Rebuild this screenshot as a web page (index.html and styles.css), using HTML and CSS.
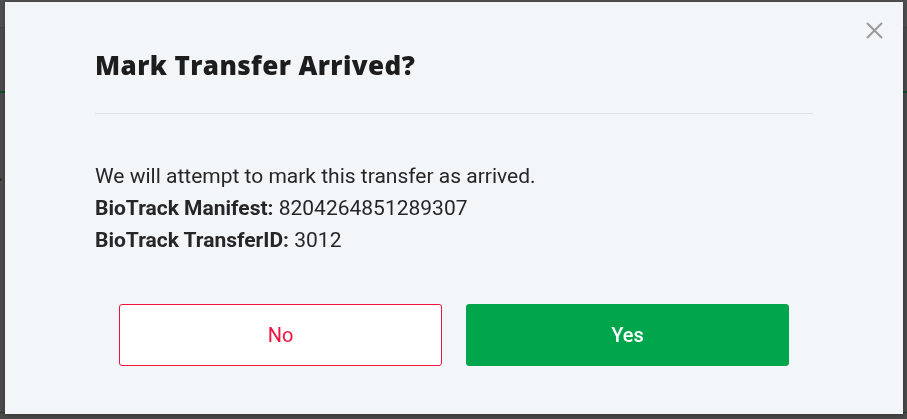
FILE: index.html
```html
<!DOCTYPE html>
<html lang="en">
<head>
    <meta charset="UTF-8">
    <meta name="viewport" content="width=device-width, initial-scale=1.0">
    <title>Mark Transfer Arrived</title>
    <link rel="stylesheet" href="styles.css">
</head>
<body>
    <div class="pagina">
        <div class="topo"></div>
        <div class="faixa"></div>
        <div class="seta">&gt;</div>
        <div class="rodape">
            <span class="rodape-texto">Receiving</span>
        </div>
    </div>

    <div class="fundo">
        <div class="modal">
            <button class="fechar" aria-label="Close">
                <svg width="17" height="17" viewBox="0 0 17 17">
                    <path d="M1 1 L16 16 M16 1 L1 16" stroke="#9a9a9a" stroke-width="2" fill="none"/>
                </svg>
            </button>

            <h2 class="titulo">Mark Transfer Arrived?</h2>

            <div class="conteudo">
                <p>We will attempt to mark this transfer as arrived.</p>
                <p><b>BioTrack Manifest:</b> 8204264851289307</p>
                <p><b>BioTrack TransferID:</b> 3012</p>
            </div>

            <div class="acoes">
                <button class="btn nao">No</button>
                <button class="btn sim">Yes</button>
            </div>
        </div>
    </div>
</body>
</html>
```

FILE: styles.css
```css
body {
  margin: 0;
  height: 100vh;
  overflow: hidden;
  background: #4a4a4a;
  font-family: Roboto, "Liberation Sans", sans-serif;
}

/* page behind the overlay */
.pagina {
  height: 100vh;
  position: relative;
}

.topo {
  height: 27px;
  background: #4f4f4f;
  border-bottom: 1px solid #434343;
}

.faixa {
  margin-top: 63px;
  height: 2px;
  background: #0b4a22;
}

.seta {
  margin-top: 77px;
  color: #2a2a2a;
  font-size: 16px;
  margin-left: -6px;
}

.rodape {
  position: absolute;
  left: 0;
  right: 0;
  bottom: 0;
  height: 6px;
  border-top: 1px solid #1f3d26;
}

.rodape-texto {
  display: inline-block;
  margin-left: -10px;
  width: 122px;
  height: 6px;
  overflow: hidden;
  border-right: 1px solid #1f3d26;
  color: #1b4a2a;
  font-size: 20px;
  line-height: 14px;
}

/* modal */
.fundo {
  position: fixed;
  inset: 0;
  padding: 2px 0 0 5px;
}

.modal {
  position: relative;
  box-sizing: border-box;
  width: 898px;
  height: 412px;
  background: #f3f6f9;
  padding: 45px 90px 0;
  box-shadow: 0 1px 4px rgba(0, 0, 0, 0.3);
}

.fechar {
  position: absolute;
  top: 20px;
  right: 20px;
  padding: 0;
  border: 0;
  background: none;
  width: 17px;
  height: 17px;
  cursor: pointer;
}

.fechar svg {
  display: block;
}

.titulo {
  margin: 0;
  padding-bottom: 30px;
  border-bottom: 1px solid #dde1e5;
  font-family: "Open Sans", sans-serif;
  font-weight: 800;
  font-size: 26px;
  letter-spacing: 0.4px;
  line-height: 36px;
  color: #1d1d1d;
}

.conteudo {
  padding-top: 46px;
  color: #262626;
  font-size: 21px;
  line-height: 32px;
}

.conteudo p {
  margin: 0;
}

.conteudo b {
  font-weight: 700;
}

.acoes {
  display: grid;
  grid-template-columns: 1fr 1fr;
  gap: 24px;
  width: 670px;
  margin: 48px auto 0;
}

.btn {
  height: 62px;
  border-radius: 3px;
  font-family: Roboto, "Liberation Sans", sans-serif;
  font-size: 20px;
  cursor: pointer;
}

.nao {
  background: white;
  border: 1px solid #f0123f;
  color: #f0123f;
}

.sim {
  background: #00a54c;
  border: 1px solid #00a54c;
  color: white;
  font-weight: 500;
}
```
